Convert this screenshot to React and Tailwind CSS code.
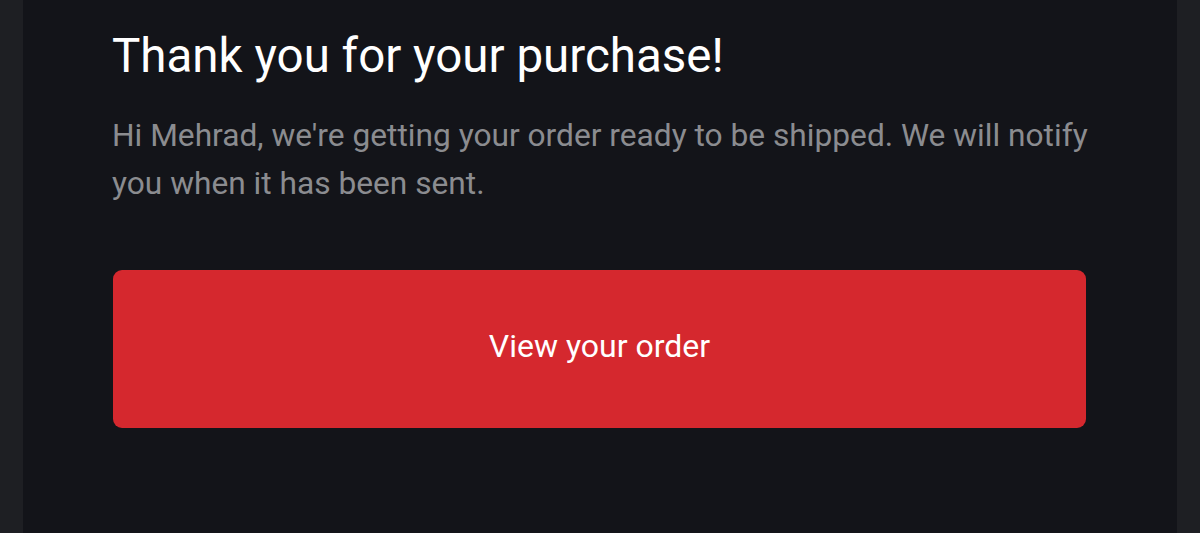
export default function App() {
  return (
    <div className="w-[1200px] h-[533px] bg-[#1e1f23] flex overflow-hidden" style={{ fontFamily: 'Roboto, "Liberation Sans", sans-serif' }}>
      <div className="ml-[23px] w-[1154px] h-full bg-[#131419] pl-[89px] pr-[60px] pt-[26px]">
        <h1 className="text-[47.5px] leading-[60px] text-white font-normal">Thank you for your purchase!</h1>
        <p className="mt-[26px] w-[990px] text-[31.7px] leading-[48px] text-[#8b8c90]">
          Hi Mehrad, we're getting your order ready to be shipped. We will notify you when it has been sent.
        </p>
        <div className="mt-[62px] ml-[1px] w-[973px] h-[158px] rounded-[9px] bg-[#d5282e] flex items-center justify-center pb-[6px]">
          <span className="text-[32px] text-white">View your order</span>
        </div>
      </div>
    </div>
  );
}
